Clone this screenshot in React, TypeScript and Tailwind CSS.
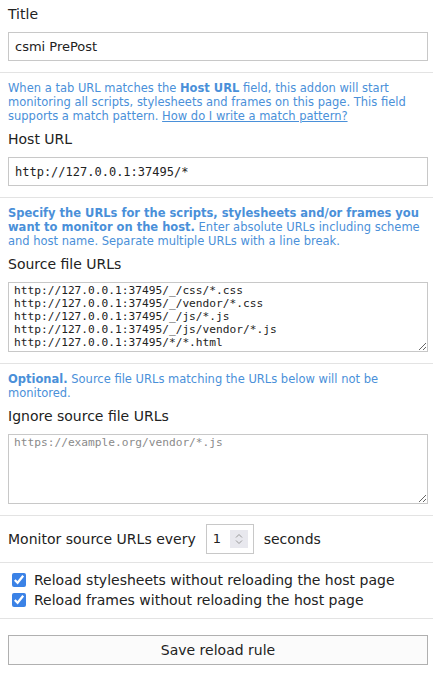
import React from 'react';

const font = { fontFamily: '"DejaVu Sans", sans-serif' };
const mono = { fontFamily: '"DejaVu Sans Mono", monospace' };

const Hr = () => <div className="border-t border-[#e3e3e3]" />;

const Help: React.FC<{ children: React.ReactNode }> = ({ children }) => (
  <p className="text-[11.5px] leading-[14px] text-[#4a90d9] mt-[8px]">{children}</p>
);

const Label: React.FC<{ children: React.ReactNode }> = ({ children }) => (
  <div className="text-[14px] leading-[17px] text-[#222] mt-[8px] mb-[9px]">{children}</div>
);

export default function App() {
  return (
    <div className="bg-white min-h-[678px] text-[#222]" style={font}>
      <div className="pl-2 pr-[5px] pb-[11px]">
        <div className="text-[14px] leading-[17px] pt-[6px] mb-[9px]">Title</div>
        <input
          type="text"
          defaultValue="csmi PrePost"
          className="w-full h-[29px] border border-[#c8c8c8] px-[6px] text-[13px] outline-none"
        />
      </div>
      <Hr />
      <div className="pl-2 pr-[5px] pb-[11px]">
        <Help>
          When a tab URL matches the <b>Host URL</b> field, this addon will start monitoring all scripts,
          stylesheets and frames on this page. This field supports a match pattern.{' '}
          <a href="#" className="underline">How do I write a match pattern?</a>
        </Help>
        <Label>Host URL</Label>
        <input
          type="text"
          defaultValue="http://127.0.0.1:37495/*"
          className="w-full h-[29px] border border-[#c8c8c8] px-[6px] text-[12px] outline-none"
          style={mono}
        />
      </div>
      <Hr />
      <div className="pl-2 pr-[5px] pb-[11px]">
        <Help>
          <b>Specify the URLs for the scripts, stylesheets and/or frames you want to monitor on the host.</b>{' '}
          Enter absolute URLs including scheme and host name. Separate multiple URLs with a line break.
        </Help>
        <Label>Source file URLs</Label>
        <textarea
          defaultValue={'http://127.0.0.1:37495/_/css/*.css\nhttp://127.0.0.1:37495/_/vendor/*.css\nhttp://127.0.0.1:37495/_/js/*.js\nhttp://127.0.0.1:37495/_/js/vendor/*.js\nhttp://127.0.0.1:37495/*/*.html'}
          className="block w-full h-[70px] border border-[#c8c8c8] px-[5px] pt-[1px] text-[11.2px] leading-[13px] outline-none resize-y"
          style={mono}
        />
      </div>
      <Hr />
      <div className="pl-2 pr-[5px] pb-[11px]">
        <Help>
          <b>Optional.</b> Source file URLs matching the URLs below will not be monitored.
        </Help>
        <Label>Ignore source file URLs</Label>
        <textarea
          placeholder="https://example.org/vendor/*.js"
          className="block w-full h-[70px] border border-[#c8c8c8] px-[5px] pt-[1px] text-[11.2px] leading-[13px] outline-none resize-y placeholder:text-[#8a8a8a]"
          style={mono}
        />
      </div>
      <Hr />
      <div className="pl-2 pr-[5px] py-2 flex items-center text-[14px]">
        <span>Monitor source URLs every</span>
        <div className="ml-[10px] w-[48px] h-[30px] border border-[#c8c8c8] flex items-center pl-[6px] pr-[5px]">
          <span className="text-[13px] flex-1">1</span>
          <span className="w-[18px] h-[18px] bg-[#e8e8ee] flex items-center justify-center">
            <svg width="10" height="14" viewBox="0 0 10 14" fill="none" stroke="#999" strokeWidth="1">
              <path d="M2 5.5 L5 2.5 L8 5.5" />
              <path d="M2 8.5 L5 11.5 L8 8.5" />
            </svg>
          </span>
        </div>
        <span className="ml-[10px]">seconds</span>
      </div>
      <Hr />
      <div className="pl-[12px] pr-[5px] pt-[7px] pb-[8px] text-[14px] leading-[20px]">
        <label className="flex items-center gap-[8px] h-[20px]">
          <input type="checkbox" defaultChecked className="w-[14px] h-[14px] m-0 accent-[#3b82e6]" />
          <span>Reload stylesheets without reloading the host page</span>
        </label>
        <label className="flex items-center gap-[8px] h-[20px]">
          <input type="checkbox" defaultChecked className="w-[14px] h-[14px] m-0 accent-[#3b82e6]" />
          <span>Reload frames without reloading the host page</span>
        </label>
      </div>
      <Hr />
      <div className="pl-2 pr-[5px] pt-4">
        <button className="w-full h-[30px] border border-[#b0b0b0] bg-[#fbfbfb] text-[14px] text-[#222]">
          Save reload rule
        </button>
      </div>
    </div>
  );
}
